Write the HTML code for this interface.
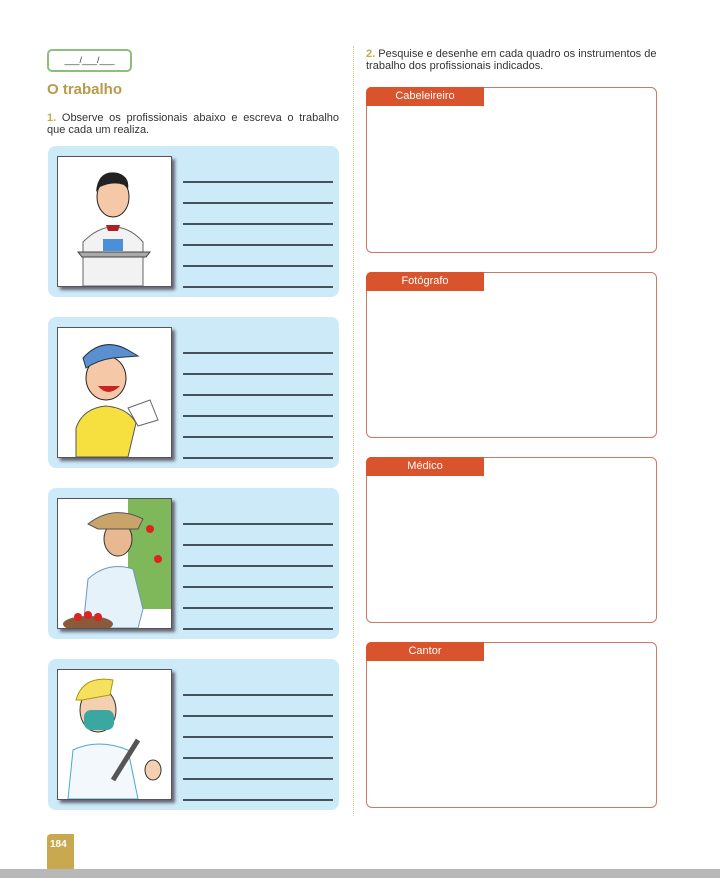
<!DOCTYPE html>
<html><head><meta charset="utf-8"><style>
*{margin:0;padding:0;box-sizing:border-box}
body{width:720px;height:878px;background:#fff;position:relative;overflow:hidden;font-family:"Liberation Sans",sans-serif;color:#333}
.abs{position:absolute}
.panel{position:absolute;left:48px;width:291px;height:151px;background:#cdeaf8;border-radius:8px}
.pic{position:absolute;left:9px;top:10px;width:115px;height:131px;background:#fff;border:1px solid #555;box-shadow:3px 3px 3px #667}
.ln{position:absolute;left:135px;width:150px;height:0;border-top:2px solid #44525c}
.box{position:absolute;left:366px;width:291px;height:166px;border:1.5px solid #c97a60;border-radius:6px}
.tab{position:absolute;left:-1px;top:-1px;width:118px;height:19px;background:#d9532c;color:#fff;font-size:11px;line-height:19px;text-align:center;border-top-left-radius:5px}
.t{font-size:11px;line-height:12px}
.n{color:#c9a84f;font-weight:bold}
</style></head><body>
<div class="abs" style="left:47px;top:49px;width:85px;height:23px;border:2px solid #8cc07a;border-radius:5px;font-size:9px;text-align:center;line-height:18px">___/___/___</div>
<div class="abs" style="left:47px;top:81px;font-size:15px;font-weight:bold;color:#b89b4a">O trabalho</div>
<div class="abs t" style="left:47px;top:112px;width:292px;text-align:justify;text-align-last:left"><span class="n">1.</span> Observe os profissionais abaixo e escreva o trabalho que cada um realiza.</div>
<div class="abs" style="left:353px;top:46px;width:0;height:770px;border-left:1.5px dotted #d8c98a"></div>
<div class="abs t" style="left:366px;top:48px;width:300px"><span class="n">2.</span> Pesquise e desenhe em cada quadro os instrumentos de trabalho dos profissionais indicados.</div>

<div class="panel" style="top:146px"><div class="pic">
<svg width="113" height="129"><ellipse cx="55" cy="40" rx="16" ry="20" fill="#f5c9a8" stroke="#222"/><path d="M38 35 Q40 12 60 16 Q72 20 70 32 L66 28 Q55 24 42 30Z" fill="#222"/><path d="M25 129 L25 85 Q40 70 55 70 Q72 70 85 85 L85 129Z" fill="#f2f2f2" stroke="#666"/><path d="M48 68 L62 68 L60 74 L50 74Z" fill="#a22"/><path d="M20 95 L92 95 L88 100 L24 100Z" fill="#aaa" stroke="#444"/><rect x="45" y="82" width="20" height="12" fill="#4a8fd8"/></svg></div>
<div class="ln" style="top:35px"></div><div class="ln" style="top:56px"></div><div class="ln" style="top:77px"></div><div class="ln" style="top:98px"></div><div class="ln" style="top:119px"></div><div class="ln" style="top:140px"></div></div>

<div class="panel" style="top:317px"><div class="pic">
<svg width="113" height="129"><ellipse cx="48" cy="50" rx="20" ry="22" fill="#f5c9a8" stroke="#222"/><path d="M25 30 Q45 8 70 22 L80 28 L55 30 Q40 32 28 40Z" fill="#5a8fd0" stroke="#234"/><path d="M40 58 Q50 70 62 58Z" fill="#c22"/><path d="M18 129 L18 100 Q25 80 48 78 Q70 80 78 95 L70 129Z" fill="#f6e040" stroke="#555"/><path d="M70 80 L92 72 L100 92 L80 98Z" fill="#fff" stroke="#666"/></svg></div>
<div class="ln" style="top:35px"></div><div class="ln" style="top:56px"></div><div class="ln" style="top:77px"></div><div class="ln" style="top:98px"></div><div class="ln" style="top:119px"></div><div class="ln" style="top:140px"></div></div>

<div class="panel" style="top:488px"><div class="pic">
<svg width="113" height="129"><rect x="70" y="0" width="43" height="110" fill="#7fb85a"/><circle cx="92" cy="30" r="4" fill="#d22"/><circle cx="100" cy="60" r="4" fill="#d22"/><ellipse cx="60" cy="40" rx="14" ry="17" fill="#e8b890" stroke="#333"/><path d="M30 25 Q55 5 85 20 L80 30 L40 30Z" fill="#c9a46a" stroke="#555"/><path d="M25 129 L30 80 Q50 62 75 70 L85 110 L80 129Z" fill="#e6f2fa" stroke="#6a9ab8"/><ellipse cx="30" cy="125" rx="25" ry="8" fill="#8a5a3a"/><circle cx="20" cy="118" r="4" fill="#d22"/><circle cx="30" cy="116" r="4" fill="#d22"/><circle cx="40" cy="118" r="4" fill="#d22"/></svg></div>
<div class="ln" style="top:35px"></div><div class="ln" style="top:56px"></div><div class="ln" style="top:77px"></div><div class="ln" style="top:98px"></div><div class="ln" style="top:119px"></div><div class="ln" style="top:140px"></div></div>

<div class="panel" style="top:659px"><div class="pic">
<svg width="113" height="129"><ellipse cx="40" cy="40" rx="18" ry="22" fill="#f5d0b0" stroke="#333"/><path d="M18 30 Q25 5 55 10 L52 25 L24 30Z" fill="#f6e060" stroke="#a90"/><rect x="26" y="40" width="30" height="20" rx="7" fill="#3aa8a0"/><path d="M10 129 L15 80 Q40 68 70 80 L80 129Z" fill="#f2f8fc" stroke="#4aa8d0"/><path d="M55 110 L80 70" stroke="#555" stroke-width="5"/><ellipse cx="95" cy="100" rx="8" ry="10" fill="#f5d0b0" stroke="#333"/></svg></div>
<div class="ln" style="top:35px"></div><div class="ln" style="top:56px"></div><div class="ln" style="top:77px"></div><div class="ln" style="top:98px"></div><div class="ln" style="top:119px"></div><div class="ln" style="top:140px"></div></div>

<div class="box" style="top:87px"><div class="tab">Cabeleireiro</div></div>
<div class="box" style="top:272px"><div class="tab">Fotógrafo</div></div>
<div class="box" style="top:457px"><div class="tab">Médico</div></div>
<div class="box" style="top:642px"><div class="tab">Cantor</div></div>

<div class="abs" style="left:47px;top:834px;width:27px;height:36px;background:#c9a84f;border-top-left-radius:4px;color:#fff;font-size:10px;font-weight:bold;padding:5px 0 0 3px">184</div>
<div class="abs" style="left:0;top:869px;width:720px;height:9px;background:#b8b8b8"></div>
</body></html>
